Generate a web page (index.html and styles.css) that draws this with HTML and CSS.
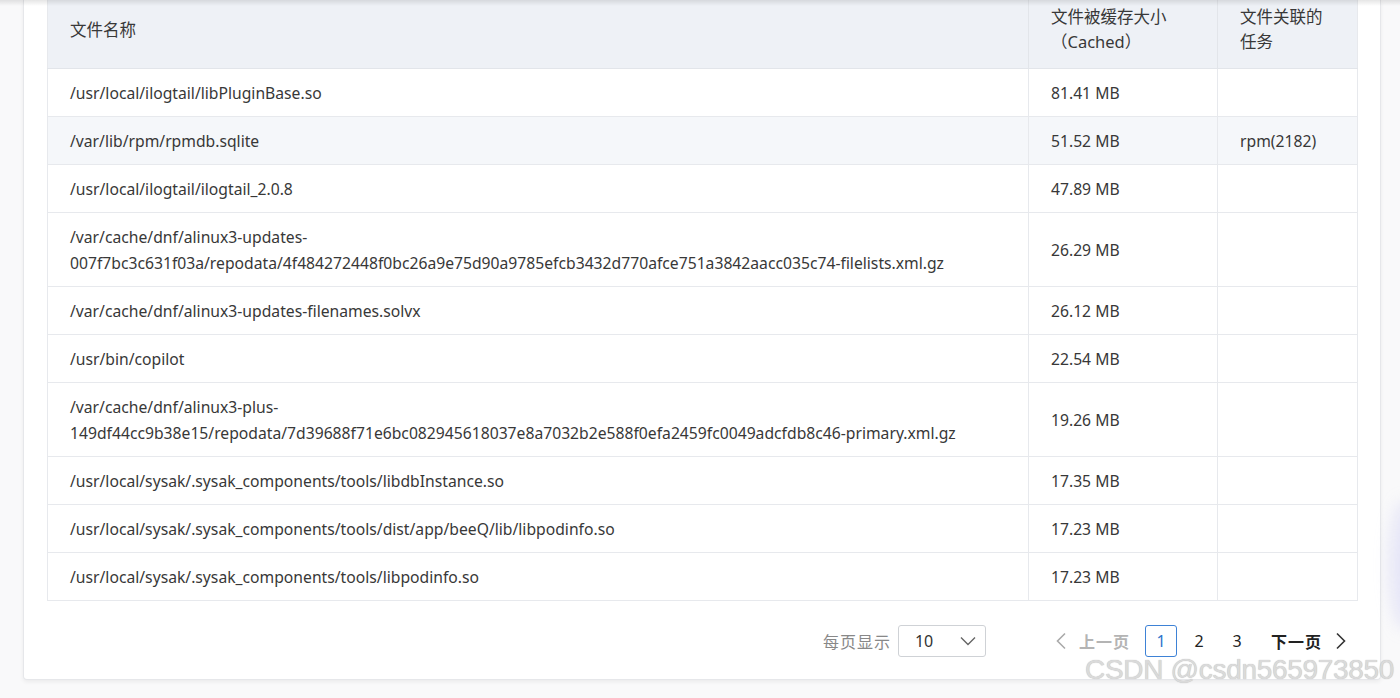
FILE: index.html
```html
<!DOCTYPE html>
<html lang="zh-CN">
<head>
<meta charset="utf-8">
<title>文件缓存</title>
<link rel="stylesheet" href="styles.css">
</head>
<body>
<div class="top-shade"></div>
<div class="page">
  <div class="card">
    <table class="tbl">
      <colgroup>
        <col class="c-name">
        <col class="c-size">
        <col class="c-task">
      </colgroup>
      <thead>
        <tr>
          <th>文件名称</th>
          <th>文件被缓存大小<br>（Cached）</th>
          <th>文件关联的<br>任务</th>
        </tr>
      </thead>
      <tbody>
        <tr><td>/usr/local/ilogtail/libPluginBase.so</td><td>81.41 MB</td><td></td></tr>
        <tr class="hover"><td>/var/lib/rpm/rpmdb.sqlite</td><td>51.52 MB</td><td>rpm(2182)</td></tr>
        <tr><td>/usr/local/ilogtail/ilogtail_2.0.8</td><td>47.89 MB</td><td></td></tr>
        <tr><td>/var/cache/dnf/alinux3-updates-<br>007f7bc3c631f03a/repodata/4f484272448f0bc26a9e75d90a9785efcb3432d770afce751a3842aacc035c74-filelists.xml.gz</td><td>26.29 MB</td><td></td></tr>
        <tr><td>/var/cache/dnf/alinux3-updates-filenames.solvx</td><td>26.12 MB</td><td></td></tr>
        <tr><td>/usr/bin/copilot</td><td>22.54 MB</td><td></td></tr>
        <tr><td>/var/cache/dnf/alinux3-plus-<br>149df44cc9b38e15/repodata/7d39688f71e6bc082945618037e8a7032b2e588f0efa2459fc0049adcfdb8c46-primary.xml.gz</td><td>19.26 MB</td><td></td></tr>
        <tr><td>/usr/local/sysak/.sysak_components/tools/libdbInstance.so</td><td>17.35 MB</td><td></td></tr>
        <tr><td>/usr/local/sysak/.sysak_components/tools/dist/app/beeQ/lib/libpodinfo.so</td><td>17.23 MB</td><td></td></tr>
        <tr><td>/usr/local/sysak/.sysak_components/tools/libpodinfo.so</td><td>17.23 MB</td><td></td></tr>
      </tbody>
    </table>
    <div class="pager">
      <span class="per-label">每页显示</span>
      <div class="select">
        <span>10</span>
        <svg class="caret" width="16" height="10" viewBox="0 0 16 10"><path d="M1 1.5 L8 8.5 L15 1.5" fill="none" stroke="#666" stroke-width="1.4"/></svg>
      </div>
      <div class="nav prev">
        <svg width="12" height="18" viewBox="0 0 12 18"><path d="M10 1.5 L2.5 9 L10 16.5" fill="none" stroke="#aaa" stroke-width="1.6"/></svg>
        <span>上一页</span>
      </div>
      <div class="pages">
        <span class="pg active">1</span>
        <span class="pg">2</span>
        <span class="pg">3</span>
      </div>
      <div class="nav next">
        <span>下一页</span>
        <svg width="12" height="18" viewBox="0 0 12 18"><path d="M2 1.5 L9.5 9 L2 16.5" fill="none" stroke="#333" stroke-width="1.6"/></svg>
      </div>
    </div>
  </div>
</div>
<div class="glow"></div>
<div class="watermark">CSDN @csdn565973850</div>
</body>
</html>
```

FILE: styles.css
```css
html, body {
  margin: 0;
  padding: 0;
}
body {
  width: 1400px;
  height: 698px;
  overflow: hidden;
  background: #f9f9fa;
  font-family: "Noto Sans", "Noto Sans CJK SC", sans-serif;
  color: #383838;
  position: relative;
}
.page {
  padding: 0 19px 0 23px;
}
.card {
  background: #fff;
  border: 1px solid #e6e7ea;
  border-top: none;
  border-radius: 0 0 4px 4px;
  box-shadow: 0 2px 4px rgba(0,0,0,0.06);
  padding: 0 23px 0 23px;
  height: 680px;
  box-sizing: border-box;
}
.tbl {
  width: 1310px;
  border-collapse: collapse;
  table-layout: fixed;
  font-size: 15.7px;
  border: 1px solid #e7e9ed;
  border-top: none;
}
.c-name { width: 981px; }
.c-size { width: 189px; }
.c-task { width: 140px; }
.tbl th {
  background: #eef1f6;
  font-weight: normal;
  text-align: left;
  line-height: 25px;
  padding: 4px 22px 14px;
  border-left: 1px solid #e2e5ea;
  border-bottom: 1px solid #e2e5ea;
  vertical-align: middle;
  font-size: 16.5px;
}
.tbl th:first-child { border-left: none; }
.tbl td {
  line-height: 26px;
  padding: 11px 22px 10px;
  border-left: 1px solid #e7e9ed;
  border-bottom: 1px solid #e7e9ed;
  vertical-align: middle;
}
.tbl td:first-child { border-left: none; }
.tbl tr.hover td { background: #f5f7fa; }
.pager {
  display: flex;
  align-items: center;
  justify-content: flex-end;
  height: 32px;
  padding: 24px 10px 0 0;
  font-size: 16px;
}
.per-label {
  color: #888;
  margin-right: 7px;
  letter-spacing: 1px;
}
.select {
  width: 88px;
  height: 32px;
  box-sizing: border-box;
  border: 1px solid #cfd2d6;
  border-radius: 3px;
  display: flex;
  align-items: center;
  justify-content: space-between;
  padding: 0 9px 0 16px;
  color: #333;
}
.nav {
  display: flex;
  align-items: center;
  font-weight: bold;
  gap: 12px;
  letter-spacing: 1px;
}
.prev {
  color: #b4b4b4;
  margin-left: 69px;
  margin-right: 15px;
}
.next {
  color: #222;
  margin-left: 18px;
  gap: 13px;
}
.pages {
  display: flex;
  gap: 6px;
}
.pg {
  width: 32px;
  height: 32px;
  box-sizing: border-box;
  display: flex;
  align-items: center;
  justify-content: center;
  color: #222;
}
.pg.active {
  border: 1px solid #3e82d6;
  border-radius: 3px;
  color: #2f74cc;
}
.top-shade {
  position: absolute;
  left: 0;
  top: 0;
  width: 1400px;
  height: 6px;
  background: linear-gradient(rgba(0,0,0,0.10), rgba(0,0,0,0));
  z-index: 2;
}
.glow {
  position: absolute;
  right: -20px;
  top: 500px;
  width: 30px;
  height: 130px;
  border-radius: 50%;
  background: rgba(170,170,240,0.25);
  filter: blur(8px);
}
.watermark {
  position: absolute;
  left: 1085px;
  top: 654px;
  font-family: "Liberation Sans", sans-serif;
  font-size: 28px;
  line-height: 32px;
  color: #dadada;
  text-shadow: 0 0 1px #b0b0b0;
  letter-spacing: -0.3px;
  white-space: nowrap;
}
```
